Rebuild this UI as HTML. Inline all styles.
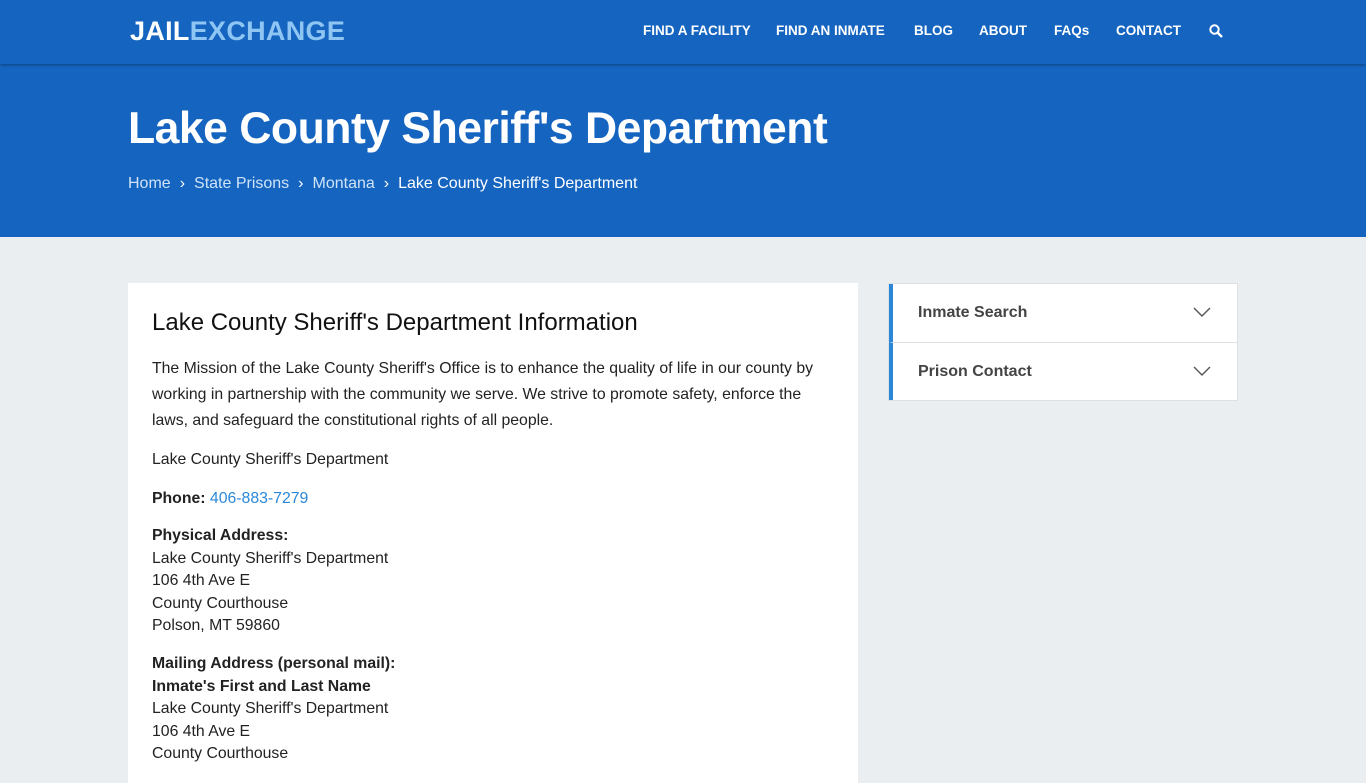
<!DOCTYPE html>
<html><head><meta charset="utf-8"><style>
*{margin:0;padding:0;box-sizing:border-box}
body{width:1366px;height:768px;overflow:hidden;background:#ebeef0;font-family:"Liberation Sans",Arial,sans-serif;color:#222}
.nav{height:64px;background:#1565c0;position:relative;box-shadow:0 1px 3px rgba(0,0,0,.35);z-index:2}
.logo{position:absolute;left:130px;top:16px;font-size:27px;font-weight:bold;color:#fff;letter-spacing:0.3px}
.logo span{color:#8ec5f3}
.menu{position:absolute;top:23px;font-size:13.5px;font-weight:bold;color:#fff}
.hero{background:#1565c0;height:173px;position:relative}
.hero h1{position:absolute;left:128px;top:40px;font-size:44.5px;color:#fff;font-weight:bold;letter-spacing:-0.5px}
.bc{position:absolute;left:128px;top:111px;font-size:16px;color:#cfe3f7}
.bc b{color:#fff;font-weight:normal}
.bc i{font-style:normal;margin:0 9px;color:#fff}
.card{position:absolute;left:128px;top:283px;width:730px;height:500px;background:#fff;padding:26px 24px}
.card h2{font-size:24px;font-weight:normal;color:#111;margin-bottom:19px}
.card p{font-size:15.8px;line-height:26px;margin-bottom:13px;color:#222}
.card p.a{line-height:22.6px;margin-bottom:15px}
.side{position:absolute;left:888px;top:283px;width:350px;background:#fff;border:1px solid #dde1e4}
.item{height:58px;border-left:4px solid #2b88d8;position:relative;font-size:16px;font-weight:bold;color:#444;padding:20px 0 0 25px}
.item+.item{border-top:1px solid #dde1e4}
.item svg{position:absolute;right:26px;top:23px}
</style></head><body>
<div class="nav">
<div class="logo">JAIL<span>EXCHANGE</span></div>
<div class="menu" style="left:643px">FIND A FACILITY</div>
<div class="menu" style="left:776px">FIND AN INMATE</div>
<div class="menu" style="left:914px">BLOG</div>
<div class="menu" style="left:979px">ABOUT</div>
<div class="menu" style="left:1054px">FAQs</div>
<div class="menu" style="left:1116px">CONTACT</div>
<svg style="position:absolute;left:1209px;top:24px" width="14" height="14" viewBox="0 0 14 14"><circle cx="5.5" cy="5.5" r="4.2" fill="none" stroke="#fff" stroke-width="2"/><path d="M8.5 8.5L13 13" stroke="#fff" stroke-width="2.4"/></svg>
</div>
<div class="hero">
<h1>Lake County Sheriff's Department</h1>
<div class="bc">Home<i>›</i>State Prisons<i>›</i>Montana<i>›</i><b>Lake County Sheriff's Department</b></div>
</div>
<div class="card">
<h2>Lake County Sheriff's Department Information</h2>
<p>The Mission of the Lake County Sheriff's Office is to enhance the quality of life in our county by working in partnership with the community we serve. We strive to promote safety, enforce the laws, and safeguard the constitutional rights of all people.</p>
<p>Lake County Sheriff's Department</p>
<p><b>Phone:</b> <span style="color:#2b88d8">406-883-7279</span></p>
<p class="a"><b>Physical Address:</b><br>Lake County Sheriff's Department<br>106 4th Ave E<br>County Courthouse<br>Polson, MT 59860</p>
<p class="a"><b>Mailing Address (personal mail):</b><br><b>Inmate's First and Last Name</b><br>Lake County Sheriff's Department<br>106 4th Ave E<br>County Courthouse</p>
</div>
<div class="side">
<div class="item">Inmate Search<svg width="18" height="10" viewBox="0 0 18 10"><path d="M1 1l8 8 8-8" fill="none" stroke="#555" stroke-width="1.4"/></svg></div>
<div class="item">Prison Contact<svg width="18" height="10" viewBox="0 0 18 10"><path d="M1 1l8 8 8-8" fill="none" stroke="#555" stroke-width="1.4"/></svg></div>
</div>
</body></html>
